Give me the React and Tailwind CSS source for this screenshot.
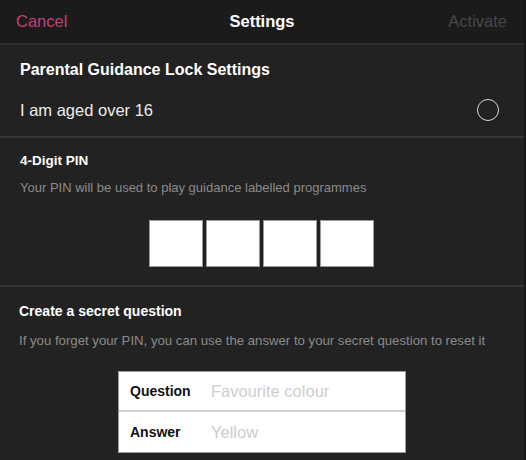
export default function App() {
  const font = { fontFamily: '"Liberation Sans", Arial, sans-serif' };
  return (
    <div className="w-[526px] h-[460px] bg-[#222222] overflow-hidden border-r-2 border-[#161616] flex flex-col" style={font}>
      <div className="h-[45px] shrink-0 bg-[#1b1b1b] border-b-2 border-[#2d2d2d] flex items-center justify-between px-4 relative">
        <span className="text-[16.5px] text-[#c33f79]">Cancel</span>
        <span className="absolute left-0 right-0 text-center text-[16.5px] font-bold text-white pointer-events-none">Settings</span>
        <span className="text-[16.5px] text-[#474747] mr-[1px]">Activate</span>
      </div>
      <div className="h-[91px] shrink-0 px-5 flex flex-col">
        <div className="h-[50px] flex items-center">
          <span className="text-[16px] font-bold text-white">Parental Guidance Lock Settings</span>
        </div>
        <div className="h-[30px] flex items-center justify-between">
          <span className="text-[16.5px] text-[#ededed]">I am aged over 16</span>
          <span className="w-[22px] h-[22px] rounded-full border-[1.5px] border-[#d8d8d8] mr-[5px]"></span>
        </div>
      </div>
      <div className="h-[2px] shrink-0 bg-[#353535]"></div>
      <div className="h-[147px] shrink-0 px-5 flex flex-col">
        <div className="h-[22px] mt-[12px] flex items-center">
          <span className="text-[13.5px] font-bold text-white">4-Digit PIN</span>
        </div>
        <div className="h-[18px] mt-[7px] flex items-center">
          <span className="text-[13px] text-[#8b8b8b]">Your PIN will be used to play guidance labelled programmes</span>
        </div>
        <div className="flex gap-[3px] mt-[23px] ml-[129px]">
          <div className="w-[54px] h-[47px] bg-white border border-[#9a9a9a]"></div>
          <div className="w-[54px] h-[47px] bg-white border border-[#9a9a9a]"></div>
          <div className="w-[54px] h-[47px] bg-white border border-[#9a9a9a]"></div>
          <div className="w-[54px] h-[47px] bg-white border border-[#9a9a9a]"></div>
        </div>
      </div>
      <div className="h-[2px] shrink-0 bg-[#353535]"></div>
      <div className="flex-1 px-5 flex flex-col">
        <div className="h-[22px] mt-[13px] flex items-center">
          <span className="text-[14px] font-bold text-white -ml-px">Create a secret question</span>
        </div>
        <div className="h-[18px] mt-[10px] flex items-center">
          <span className="text-[13.2px] text-[#8b8b8b] -ml-px">If you forget your PIN, you can use the answer to your secret question to reset it</span>
        </div>
        <div className="mt-[21px] ml-[98px] w-[288px] border border-[#9a9a9a] bg-white flex flex-col">
          <div className="h-[40px] flex items-center border-b-2 border-[#cfcfcf]">
            <span className="w-[92px] pl-[11px] text-[14px] font-bold text-[#111]">Question</span>
            <span className="text-[16.5px] text-[#cdcdcd]">Favourite colour</span>
          </div>
          <div className="h-[40px] flex items-center">
            <span className="w-[92px] pl-[11px] text-[14px] font-bold text-[#111]">Answer</span>
            <span className="text-[16.5px] text-[#cdcdcd]">Yellow</span>
          </div>
        </div>
      </div>
    </div>
  );
}
